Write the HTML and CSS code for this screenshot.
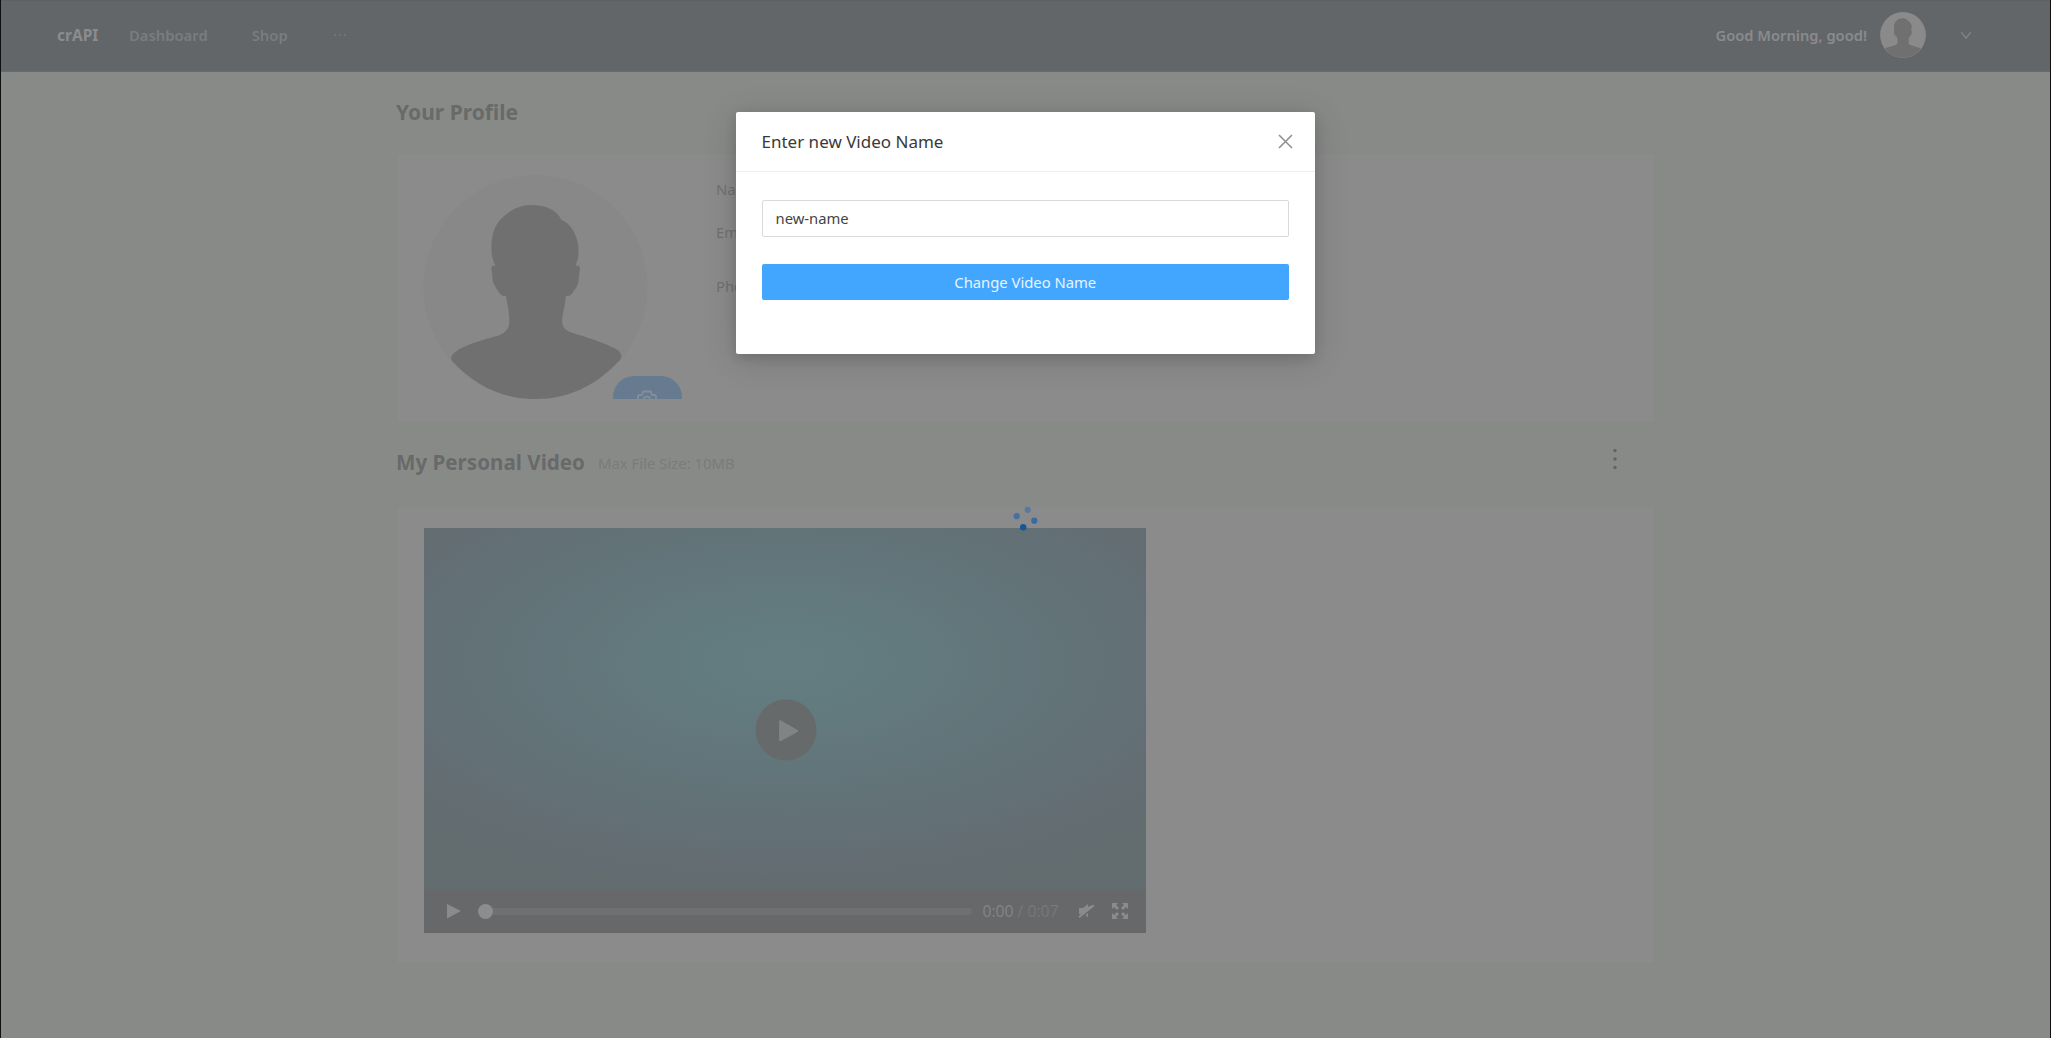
FILE: index.html
```html
<!DOCTYPE html>
<html lang="en">
<head>
<meta charset="utf-8">
<title>crAPI</title>
<link rel="stylesheet" href="styles.css">
</head>
<body>
<div class="app">
  <header class="topbar">
    <span class="brand">crAPI</span>
    <nav class="menu">
      <a class="menu-item">Dashboard</a>
      <a class="menu-item">Shop</a>
      <svg class="more" width="14" height="4" viewBox="0 0 14 4"><circle cx="2" cy="2" r="1"/><circle cx="7" cy="2" r="1"/><circle cx="12" cy="2" r="1"/></svg>
    </nav>
    <span class="greeting">Good Morning, good!</span>
    <svg class="avatar-small" width="46" height="46" viewBox="0 0 225 225">
      <defs>
        <clipPath id="round"><circle cx="112.5" cy="112.5" r="111.5"/></clipPath>
      </defs>
      <circle cx="112.5" cy="112.5" r="112" fill="#8a8a8a"/>
      <path clip-path="url(#round)" fill="#707070" d="M109 30C83 30 68 52 68 74C68 84 70 88 72 92C65 90 69 103 70 109C74 114 77 121 83 121C85 136 89 152 83 157C74 168 40 167 25 180L60 225H165L200 180C180 167 150 168 142 157C137 152 141 136 142 121C148 121 151 114 155 105C156 96 157 91 152 92C161 68 149 46 139 45C134 35 122 30 109 30Z"/>
    </svg>
    <svg class="chevron" width="12" height="9" viewBox="0 0 12 9"><path d="M1.3 1.2L6 7.2L10.7 1.2"/></svg>
  </header>

  <main class="content">
    <h2 class="heading profile-heading">Your Profile</h2>
    <section class="card profile">
      <div class="portrait">
        <svg class="avatar" width="225" height="224" viewBox="0 0 225 224">
          <circle cx="112.5" cy="112" r="112" fill="#888"/>
          <path fill="#707070" d="M109 30C95 30 86 36 78 44C71 51 68 62 68.500 74C68.500 81 70 86 72.500 90.500C69 90 68 92 68.500 94.500L70 107C72 112 75 116 78 120C80 121 81 121 83 121C83.500 127 86 133 86 140C86.500 146 86.500 150 85 153C80 162 70 161 60 165C50 168 36 173 31 178C27 183 28 183 29 186C52 211 80 224 112 224C146 224 172 211 196 186C199 183 199 180 196 176C188 170 166 163 156 160C146 157 142 155 140 151C138 145 140 138 141 134C142 130 142 126 143 121C149 122 150 116 153 113C157 107 155 101 157 95C157 91 156 90 152.500 90.500C156 83 156 76 155 69C153 58 147 48 138.500 45C134 35 122 30 109 30Z"/>
        </svg>
        <div class="camera">
          <svg width="22" height="20" viewBox="0 0 22 20"><path d="M2 19V7.500Q2 6 3.500 6H6L7.300 2.500H14.700L16 6H18.500Q20 6 20 7.500V19"/><path d="M6.500 11Q11 4 15.500 11"/></svg>
        </div>
      </div>
      <div class="fields">
        <span>Name:</span>
        <span>Email:</span>
        <span>Phone:</span>
      </div>
    </section>

    <div class="video-head">
      <h2 class="heading video-heading">My Personal Video</h2>
      <span class="hint">Max File Size: 10MB</span>
      <svg class="kebab" width="6" height="22" viewBox="0 0 6 22"><circle cx="3" cy="2.500" r="1.700"/><circle cx="3" cy="11" r="1.700"/><circle cx="3" cy="19.500" r="1.700"/></svg>
    </div>

    <section class="card video-card">
      <div class="player">
        <div class="frame">
          <svg class="big-play" width="62" height="62" viewBox="0 0 62 62"><circle cx="31" cy="31" r="30.500" fill="#676a6b"/><path d="M25.300 22.500L42 32L25.300 41Z" fill="#808484" stroke="#808484" stroke-width="2.500" stroke-linejoin="round"/></svg>
        </div>
        <div class="controls">
          <svg class="play" width="16" height="16" viewBox="0 0 16 16"><path d="M1 1L15 8L1 15.500Z" stroke-linejoin="round"/></svg>
          <div class="track"><span class="knob"></span></div>
          <div class="time"><span class="now">0:00</span> <span class="total">/ 0:07</span></div>
          <svg class="mute" width="17" height="16" viewBox="0 0 17 16"><path d="M1 5H5L10 1V4L15.500 1.500L16.500 3L1.500 15L.5 13.500L3 11H1ZM7.500 12L10 10V14.500Z"/></svg>
          <svg class="full" width="18" height="18" viewBox="0 0 18 18"><path d="M1 1H7L5 3L8 6L6 8L3 5L1 7ZM17 1V7L15 5L12 8L10 6L13 3L11 1ZM1 17V11L3 13L6 10L8 12L5 15L7 17ZM17 17H11L13 15L10 12L12 10L15 13L17 11Z"/></svg>
        </div>
      </div>
    </section>
  </main>
</div>

<svg class="spinner" width="26" height="26" viewBox="0 0 26 26"><circle cx="14.700" cy="3.800" r="3.100" fill="#587a9e"/><circle cx="3.700" cy="10.200" r="3.100" fill="#4671a0"/><circle cx="21.300" cy="14.700" r="3.100" fill="#3b6a9f"/><circle cx="10.200" cy="21.300" r="3.200" fill="#18569a"/></svg>

<div class="modal" role="dialog">
  <div class="modal-head">
    <span>Enter new Video Name</span>
    <svg width="15" height="15" viewBox="0 0 15 15"><path d="M1 1L14 14M14 1L1 14"/></svg>
  </div>
  <div class="modal-body">
    <input class="name-input" type="text" value="new-name">
    <button class="submit">Change Video Name</button>
  </div>
</div>
</body>
</html>
```
FILE: styles.css
```css
* { box-sizing: border-box; }
body {
  margin: 0;
  background: #888a88;
  font: 14.8px/24px "Noto Sans", "Open Sans", sans-serif;
}
.app {
  height: 1038px;
  border: solid #101010;
  border-width: 0 1px;
  overflow: hidden;
}

.topbar {
  display: flex;
  align-items: center;
  height: 72px;
  padding: 0 78px 2px 56px;
  background: #626669;
  border-top: 1px solid #5c6063;
  border-bottom: 1px solid #6b6b6f;
  color: #818283;
  font-weight: 600;
  white-space: nowrap;
}
.brand { width: 72px; font-size: 15.5px; font-weight: 700; color: #8b8c8d; }
.menu { display: flex; align-items: center; flex: 1; gap: 44px; }
.menu-item { color: #7b7c7d; }
.more { margin-left: 1px; fill: #77797a; }
.greeting { margin-right: 13px; color: #8a8b8c; font-size: 14.7px; }
.chevron { margin-left: 34px; fill: none; stroke: #838586; stroke-width: 1.3; }

.content { width: 1259px; margin-left: 395px; }
.heading { margin: 0; font-size: 21px; line-height: 32px; font-weight: 700; color: #686a69; }
.profile-heading { padding-top: 24px; height: 81px; }
.video-heading { font-size: 20.6px; }
.card { background: #8b8b8b; border: 1px solid #888888; }

.profile { display: flex; height: 270px; padding: 21px 26px; }
.portrait { position: relative; width: 259px; height: 224px; overflow: hidden; }
.avatar { display: block; }
.camera {
  position: absolute;
  left: 189.5px;
  top: 201px;
  width: 69px;
  height: 42px;
  border-radius: 21px;
  padding-top: 13px;
  background: #677b90;
}
.camera svg { display: block; margin: 0 auto; fill: none; stroke: #858e97; stroke-width: 1.8; }
.fields { display: flex; flex-direction: column; padding: 2px 0 0 34px; color: #707070; }
.fields span { height: 43px; }
.fields span:nth-child(2) { height: 54px; }

.video-head { display: flex; align-items: center; height: 83px; padding: 0 37px 5px 0; }
.hint { flex: 1; margin-left: 13px; padding-top: 2px; color: #7a7b7a; font-size: 14.9px; }
.kebab { fill: #626363; margin-top: -7px; }

.video-card { height: 458px; padding: 21px 26.5px; }
.player { width: 722px; height: 405px; display: flex; flex-direction: column; }
.frame {
  flex: 1;
  padding: 171px 0 0 331px;
  background: radial-gradient(ellipse 500px 235px at 50% 134px, #637d81 0%, #627b7f 20%, #627479 52%, #636e74 82%, #636c6f 100%);
}
.big-play { display: block; }
.controls { display: flex; align-items: center; height: 44px; padding: 0 17px 0 22px; background: #676869; }
.controls svg { display: block; flex: none; fill: #8b8b8b; }
.track { flex: none; width: 494px; height: 7px; margin-left: 16px; border-radius: 4px; background: #707070; display: flex; align-items: center; }
.knob { width: 15px; height: 15px; border-radius: 50%; background: #8d8d8d; }
.time { flex: 1; padding-left: 11px; font: 15.7px/24px "Open Sans", sans-serif; white-space: nowrap; }
.now { color: #858585; }
.total { color: #777978; }
.full { margin-left: 16px; }

.spinner { position: absolute; left: 1013px; top: 506px; }

.modal {
  position: absolute;
  left: 735.5px;
  top: 112px;
  width: 579.5px;
  height: 241.5px;
  border-radius: 2px;
  background: #fff;
  box-shadow: 0 4px 12px rgba(0,0,0,.13), 0 6px 36px rgba(0,0,0,.14);
}
.modal-head {
  display: flex;
  align-items: center;
  justify-content: space-between;
  height: 60px;
  padding: 0 22px 0 26px;
  border-bottom: 1px solid #eee;
  font-size: 17px;
  color: #393939;
}
.modal-head svg { fill: none; stroke: #909090; stroke-width: 1.6; }
.modal-body { display: flex; flex-direction: column; gap: 27px; padding: 28px 26px; }
.name-input, .submit { font: inherit; border-radius: 2px; }
.name-input { height: 37px; padding: 0 14px 2px 13px; border: 1.5px solid #d9d9d9; color: #444; background: #fff; outline: 0; }
.submit { height: 36px; padding: 0; border: 0; background: #42a6ff; color: #e8f4ff; }
```
